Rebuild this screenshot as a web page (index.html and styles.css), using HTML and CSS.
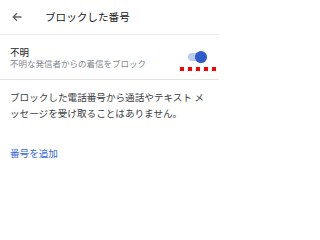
FILE: index.html
```html
<!DOCTYPE html>
<html lang="ja">
<head>
<meta charset="utf-8">
<link rel="stylesheet" href="styles.css">
</head>
<body>
<div class="app">
  <header class="bar">
    <svg class="back" width="10" height="10" viewBox="0 0 10 10" aria-hidden="true">
      <path d="M9.5 5H1.2M5 1.2L1.2 5L5 8.8" fill="none" stroke="#5f6368" stroke-width="1.3"/>
    </svg>
    <h1 class="title">ブロックした番号</h1>
  </header>
  <section class="row">
    <div class="row-text">
      <div class="primary">不明</div>
      <div class="secondary">不明な発信者からの着信をブロック</div>
    </div>
    <div class="switch">
      <span class="track"></span>
      <span class="knob"></span>
    </div>
    <div class="marks"><i></i><i></i><i></i><i></i><i></i></div>
  </section>
  <p class="info">ブロックした電話番号から通話やテキスト メッセージを受け取ることはありません。</p>
  <a class="add">番号を追加</a>
</div>
</body>
</html>
```
FILE: styles.css
```css
html, body {
  margin: 0;
  padding: 0;
  background: #ffffff;
}
body {
  font-family: "Noto Sans CJK JP", "Noto Sans", sans-serif;
  color: #202124;
}
.app {
  width: 219px;
  height: 237px;
  overflow: hidden;
}
.bar {
  height: 34px;
  display: flex;
  align-items: center;
  padding-left: 12px;
  border-bottom: 1px solid #ebebeb;
  box-sizing: border-box;
  height: 35px;
}
.back {
  display: block;
  flex: none;
}
.title {
  margin: 0 0 0 23px;
  font-size: 10.6px;
  font-weight: 400;
  line-height: 14px;
  color: #202124;
}
.row {
  position: relative;
  height: 45px;
  box-sizing: border-box;
  border-bottom: 1px solid #e3e3e3;
  display: flex;
  align-items: center;
  padding: 0 12px 0 10px;
}
.row-text {
  flex: 1;
  display: flex;
  flex-direction: column;
  padding-top: 1px;
}
.primary {
  font-size: 9.5px;
  line-height: 12px;
  color: #202124;
}
.secondary {
  font-size: 8.5px;
  line-height: 11px;
  color: #80868b;
}
.switch {
  position: relative;
  width: 19px;
  height: 12px;
  flex: none;
}
.track {
  position: absolute;
  left: 0;
  top: 2px;
  width: 17px;
  height: 8px;
  border-radius: 4px;
  background: #bccbef;
}
.knob {
  position: absolute;
  right: 0;
  top: 0;
  width: 12px;
  height: 12px;
  border-radius: 50%;
  background: #2f5ccb;
  box-shadow: 0 0.5px 1px rgba(0,0,0,0.25);
}
.marks {
  position: absolute;
  left: 180px;
  top: 32px;
  display: flex;
  gap: 4px;
}
.marks i {
  display: block;
  width: 4px;
  height: 4px;
  background: #ff0000;
}
.info {
  margin: 10px 0 0 0;
  padding: 0 12px 0 10px;
  font-size: 9.6px;
  line-height: 15.5px;
  color: #3c4043;
}
.add {
  display: block;
  margin: 25px 0 0 10px;
  font-size: 9.6px;
  line-height: 15px;
  color: #3367d6;
}
```
